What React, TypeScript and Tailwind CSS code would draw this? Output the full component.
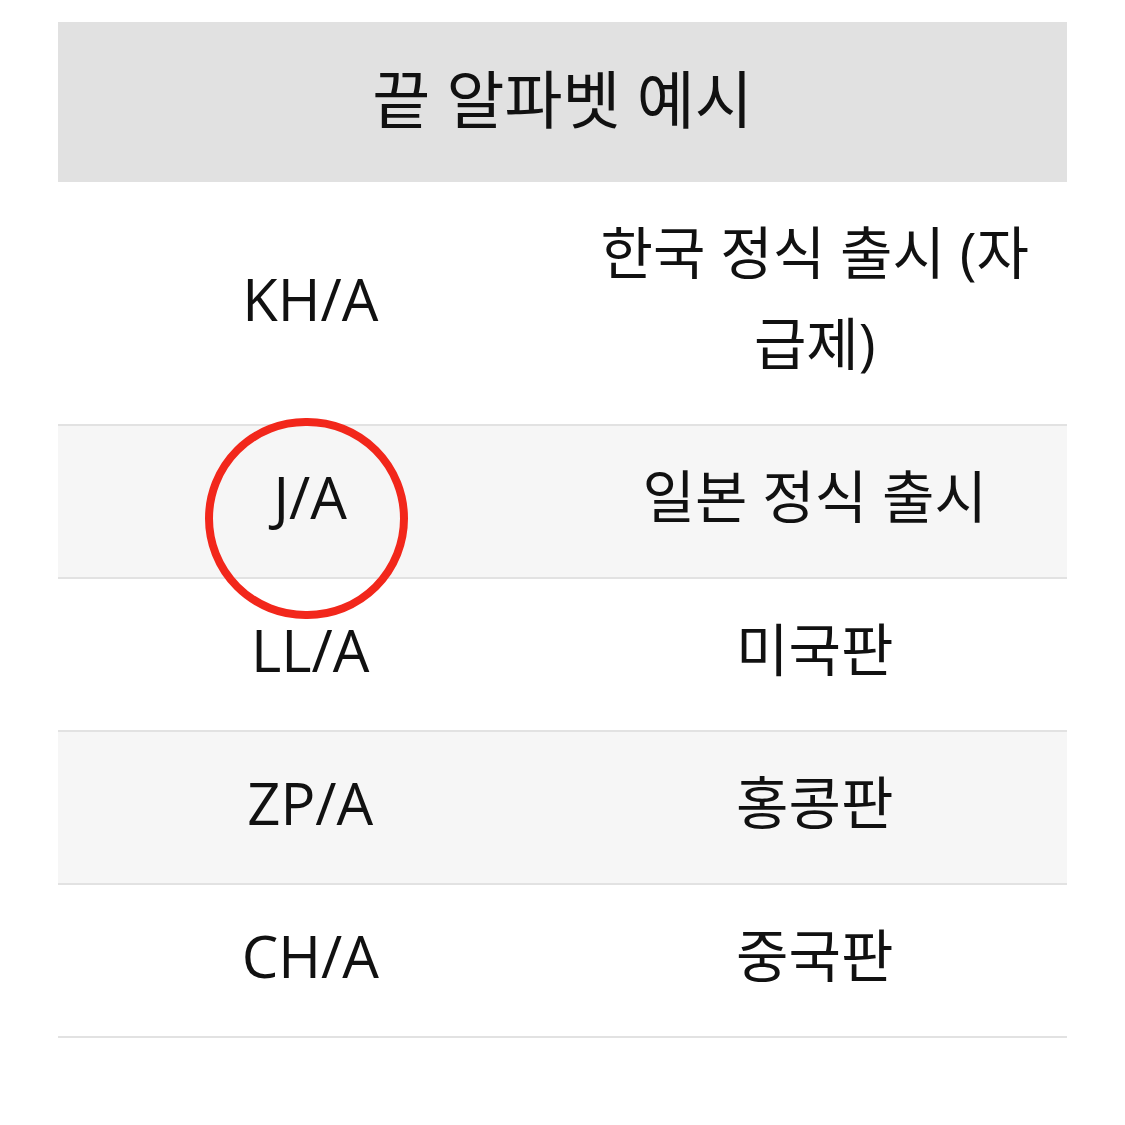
import React from "react";

const rows: [string, string][] = [
  ["KH/A", "한국 정식 출시 (자급제)"],
  ["J/A", "일본 정식 출시"],
  ["LL/A", "미국판"],
  ["ZP/A", "홍콩판"],
  ["CH/A", "중국판"],
];

export default function App() {
  return (
    <div
      className="w-[1125px] h-[1125px] bg-white pt-[22px] px-[58px] text-[#111]"
      style={{ fontFamily: '"Open Sans", "Noto Sans CJK KR", sans-serif' }}
    >
      <div className="relative w-[1009px]">
        <div className="h-[160px] bg-[#e1e1e1] flex items-center justify-center pb-[8px] text-[63px] leading-none">
          끝 알파벳 예시
        </div>
        {rows.map(([code, label], i) => (
          <div
            key={code}
            className={`grid grid-cols-2 border-b-2 border-[#e2e2e2] ${
              i % 2 === 1 ? "bg-[#f6f6f6]" : "bg-white"
            }`}
          >
            <div className="flex items-center justify-center px-[30px] pt-[25px] pb-[35px] text-[58px] leading-[91px] text-center">
              {code}
            </div>
            <div className="flex items-center justify-center px-[30px] pt-[25px] pb-[35px] text-[57px] leading-[91px] text-center">
              {label}
            </div>
          </div>
        ))}
        <div className="absolute left-[147px] top-[396px] w-[203px] h-[201px] rounded-full border-[8px] border-[#f2271b]" />
      </div>
    </div>
  );
}
